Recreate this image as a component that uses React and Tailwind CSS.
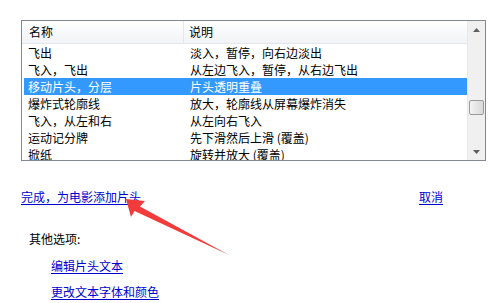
const ROWS = [
  ['飞出', '淡入，暂停，向右边淡出'],
  ['飞入，飞出', '从左边飞入，暂停，从右边飞出'],
  ['移动片头，分层', '片头透明重叠'],
  ['爆炸式轮廓线', '放大，轮廓线从屏幕爆炸消失'],
  ['飞入，从左和右', '从左向右飞入'],
  ['运动记分牌', '先下滑然后上滑 (覆盖)'],
  ['掀纸', '旋转并放大 (覆盖)'],
];

const FONT = { fontFamily: '"SimSun", "Noto Sans CJK SC", sans-serif' };

export default function App() {
  return (
    <div className="w-[495px] h-[303px] bg-white overflow-hidden text-[12px] leading-none text-black" style={FONT}>
      <div className="pl-[21px] pt-[20px]">
        {/* list view */}
        <div className="w-[465px] h-[141px] border border-[#828790] flex overflow-hidden">
          <div className="flex-1 flex flex-col overflow-hidden">
            <div className="h-[23px] shrink-0 flex bg-gradient-to-b from-white to-[#f1f3f6] border-b border-[#e3e6ea]">
              <div className="w-[162px] pl-[7px] flex items-center border-r border-[#e3e6ea]">名称</div>
              <div className="pl-[5px] flex items-center">说明</div>
            </div>
            {ROWS.map((r, i) => (
              <div
                key={i}
                className={`h-[17px] shrink-0 flex items-center ml-[2px] ${i === 2 ? 'bg-[#3399ff] text-white' : ''}`}
              >
                <div className="w-[161px] pl-[4px] whitespace-nowrap">{r[0]}</div>
                <div className="pl-[5px] whitespace-nowrap">{r[1]}</div>
              </div>
            ))}
          </div>
          {/* scrollbar */}
          <div className="w-[18px] shrink-0 bg-[#f0f0f0] flex flex-col items-center border-l border-[#e8e8e8]">
            <div className="h-[17px] w-full flex items-center justify-center">
              <svg width="7" height="4" viewBox="0 0 7 4"><path d="M0 4 L3.5 0 L7 4 Z" fill="#606060" /></svg>
            </div>
            <div className="mt-[62px] w-[15px] h-[15px] rounded-[2px] border border-[#9a9a9a] bg-gradient-to-r from-[#f3f3f3] to-[#d9d9d9]"></div>
            <div className="flex-1"></div>
            <div className="h-[17px] w-full flex items-center justify-center">
              <svg width="7" height="4" viewBox="0 0 7 4"><path d="M0 0 L3.5 4 L7 0 Z" fill="#606060" /></svg>
            </div>
          </div>
        </div>
      </div>

      <div className="relative">
        <div className="flex justify-between pl-[21px] pr-[52px] pt-[30px]">
          <a href="#" className="text-[#0000cc] underline underline-offset-2">完成，为电影添加片头</a>
          <a href="#" className="text-[#0000cc] underline underline-offset-2">取消</a>
        </div>

        {/* red annotation arrow */}
        <svg className="absolute left-0 top-0" width="495" height="140" viewBox="0 160 495 140">
          <path d="M126 198 L145 200 L140 205.5 L229 254 L134.5 210 L131 216 Z" fill="#f23c3c" />
        </svg>

        <div className="pl-[29px] pt-[30px]">其他选项:</div>
        <div className="pl-[51px] pt-[15px] flex flex-col gap-[14px]">
          <a href="#" className="text-[#0000cc] underline underline-offset-2">编辑片头文本</a>
          <a href="#" className="text-[#0000cc] underline underline-offset-2">更改文本字体和颜色</a>
        </div>
      </div>
    </div>
  );
}
